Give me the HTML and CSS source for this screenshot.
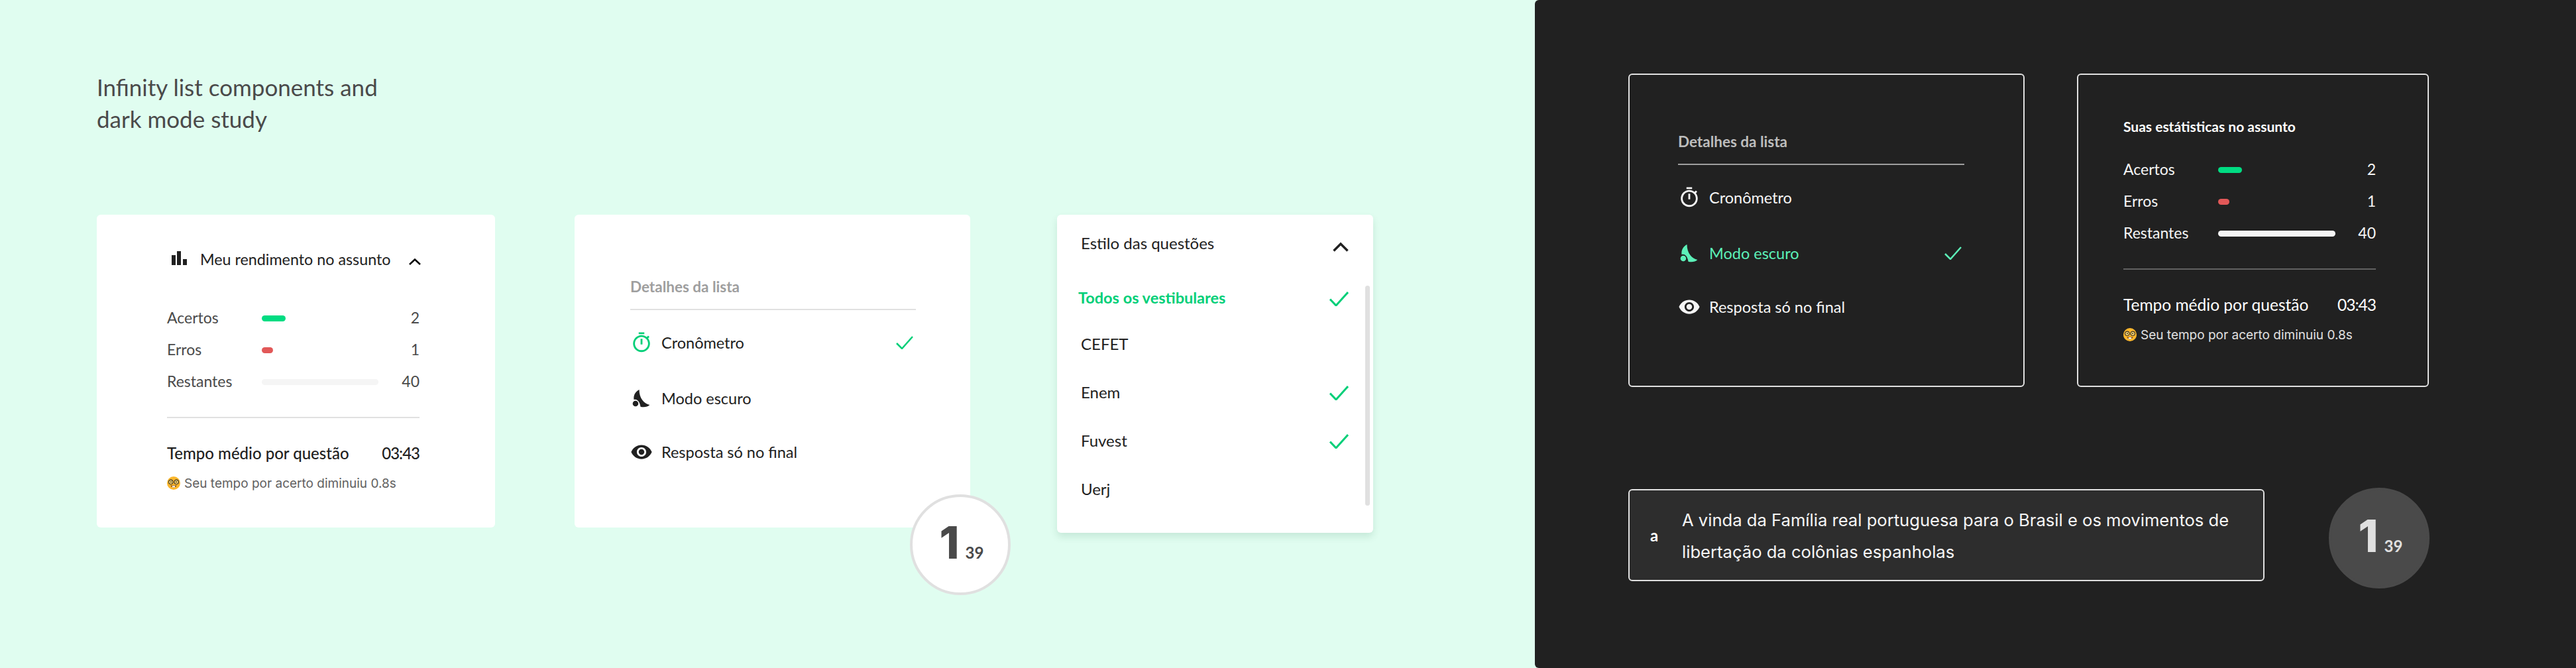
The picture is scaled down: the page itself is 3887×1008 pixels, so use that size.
FILE: index.html
```html
<!DOCTYPE html>
<html lang="en">
<head>
    <meta charset="utf-8">
    <title>Infinity list components and dark mode study</title>
    <link rel="stylesheet" href="styles.css">
</head>
<body>
<svg class="defs" width="0" height="0">
    <symbol id="i-timer" viewBox="0 0 24 24"><path d="M15 1H9v2h6V1zm-4 13h2V8h-2v6zm8.030-6.610l1.420-1.420c-.43-.51-.9-.99-1.410-1.410l-1.420 1.420C16.070 4.740 14.120 4 12 4c-4.970 0-9 4.030-9 9s4.020 9 9 9 9-4.030 9-9c0-2.120-.74-4.070-1.970-5.610zM12 20c-3.870 0-7-3.130-7-7s3.130-7 7-7 7 3.130 7 7-3.130 7-7 7z"/></symbol>
    <symbol id="i-moon" viewBox="30 18 82 86"><path d="M62 20C44 28 34 48 38 66C48 62 64 70 68 98C82 102 100 100 110 90C85 85 62 60 62 20z"/><circle cx="45" cy="84" r="13"/></symbol>
    <symbol id="i-eye" viewBox="0 0 24 24"><path d="M12 4.500C7 4.500 2.730 7.610 1 12c1.730 4.390 6 7.500 11 7.500s9.270-3.110 11-7.500c-1.730-4.390-6-7.500-11-7.500zM12 17c-2.760 0-5-2.240-5-5s2.240-5 5-5 5 2.240 5 5-2.240 5-5 5zm0-8c-1.660 0-3 1.340-3 3s1.340 3 3 3 3-1.340 3-3-1.340-3-3-3z"/></symbol>
    <symbol id="i-emoji" viewBox="0 0 20 20">
        <circle cx="10" cy="10" r="10" fill="#fbb62c"/>
        <path d="M5 13.500c2.500 4 7.500 4 10 0z" fill="#7a4a1c"/>
        <path d="M8 14h1.800v2.400H8zM10.200 14H12v2.400h-1.800z" fill="#fff"/>
        <circle cx="5.800" cy="8.300" r="3.200" fill="#fdd874" stroke="#3a3226" stroke-width="1.200"/>
        <circle cx="14.200" cy="8.300" r="3.200" fill="#fdd874" stroke="#3a3226" stroke-width="1.200"/>
        <circle cx="6" cy="8.300" r="1" fill="#3a3226"/>
        <circle cx="14" cy="8.300" r="1" fill="#3a3226"/>
    </symbol>
</svg>

<div class="page">
    <section class="light">
        <h1 class="title">Infinity list components and<br>dark mode study</h1>
        <div class="cards">
            <div class="card card-stats">
                <div class="stats-head">
                    <svg class="bars-icon" width="23" height="21" viewBox="0 0 23 21"><path d="M0 6h6v15H0zM8 0h6v21H8zM17 12h6v9h-6z"/></svg>
                    <span>Meu rendimento no assunto</span>
                    <svg class="chev" width="18" height="10" viewBox="0 0 18 10"><path d="M1 9l8-7.500L17 9"/></svg>
                </div>
                <div class="stat"><span class="stat-name">Acertos</span><span class="track"><i class="fill green" style="width:36px"></i></span><span class="stat-num">2</span></div>
                <div class="stat"><span class="stat-name">Erros</span><span class="track"><i class="fill red" style="width:17px"></i></span><span class="stat-num">1</span></div>
                <div class="stat"><span class="stat-name">Restantes</span><span class="track"><i class="fill rest" style="width:176px"></i></span><span class="stat-num">40</span></div>
                <div class="rule"></div>
                <div class="time"><span>Tempo médio por questão</span><span class="time-value">03:43</span></div>
                <div class="note"><svg width="20" height="20"><use href="#i-emoji"/></svg><span>Seu tempo por acerto diminuiu 0.8s</span></div>
            </div>

            <div class="card card-details">
                <div class="details-title">Detalhes da lista</div>
                <div class="option"><svg class="opt-icon on"><use href="#i-timer"/></svg><span>Cronômetro</span><svg class="check" width="26" height="20" viewBox="0 0 26 20"><path d="M1 11l8 8L25 1"/></svg></div>
                <div class="option"><svg class="opt-icon moon"><use href="#i-moon"/></svg><span>Modo escuro</span></div>
                <div class="option"><svg class="opt-icon"><use href="#i-eye"/></svg><span>Resposta só no final</span></div>
                <div class="counter"><b>1</b><span>39</span></div>
            </div>

            <div class="card card-select">
                <div class="select-head"><span>Estilo das questões</span><svg class="chev wide" width="24" height="15" viewBox="0 0 24 15"><path d="M1.500 13.500L12 3l10.500 10.500"/></svg></div>
                <div class="select-row active"><span>Todos os vestibulares</span><svg class="check big" width="29" height="22" viewBox="0 0 29 22"><path d="M1 11.500L10 21 28 1"/></svg></div>
                <div class="select-row"><span>CEFET</span></div>
                <div class="select-row"><span>Enem</span><svg class="check big" width="29" height="22" viewBox="0 0 29 22"><path d="M1 11.500L10 21 28 1"/></svg></div>
                <div class="select-row"><span>Fuvest</span><svg class="check big" width="29" height="22" viewBox="0 0 29 22"><path d="M1 11.500L10 21 28 1"/></svg></div>
                <div class="select-row"><span>Uerj</span></div>
                <div class="scrollbar"></div>
            </div>
        </div>
    </section>

    <section class="dark">
        <div class="dark-cards">
            <div class="card-line card-details-dark">
                <div class="details-title">Detalhes da lista</div>
                <div class="option"><svg class="opt-icon"><use href="#i-timer"/></svg><span>Cronômetro</span></div>
                <div class="option mint"><svg class="opt-icon moon"><use href="#i-moon"/></svg><span>Modo escuro</span><svg class="check" width="26" height="20" viewBox="0 0 26 20"><path d="M1 11l8 8L25 1"/></svg></div>
                <div class="option"><svg class="opt-icon"><use href="#i-eye"/></svg><span>Resposta só no final</span></div>
            </div>
            <div class="card-line card-stats-dark">
                <div class="dark-stats-title">Suas estátisticas no assunto</div>
                <div class="stat"><span class="stat-name">Acertos</span><span class="track"><i class="fill green" style="width:36px"></i></span><span class="stat-num">2</span></div>
                <div class="stat"><span class="stat-name">Erros</span><span class="track"><i class="fill red" style="width:17px"></i></span><span class="stat-num">1</span></div>
                <div class="stat"><span class="stat-name">Restantes</span><span class="track"><i class="fill rest" style="width:177px"></i></span><span class="stat-num">40</span></div>
                <div class="rule"></div>
                <div class="time"><span>Tempo médio por questão</span><span class="time-value">03:43</span></div>
                <div class="note"><svg width="20" height="20"><use href="#i-emoji"/></svg><span>Seu tempo por acerto diminuiu 0.8s</span></div>
            </div>
        </div>
        <div class="answer-row">
            <div class="answer">
                <b class="letter">a</b>
                <p>A vinda da Família real portuguesa para o Brasil e os movimentos de libertação da colônias espanholas</p>
            </div>
            <div class="counter counter-dark"><b>1</b><span>39</span></div>
        </div>
    </section>
</div>
</body>
</html>
```

FILE: styles.css
```css
* {
    box-sizing: border-box;
}
html, body {
    margin: 0;
    height: 1008px;
    overflow: hidden;
}
body {
    font-family: "Lato", "Liberation Sans", sans-serif;
    color: #212121;
    background: #e0fdf0;
}
.defs {
    position: absolute;
}
.page {
    display: flex;
    height: 1008px;
}

/* light side */
.light {
    width: 2316px;
    padding: 107px 0 0 146px;
}
.title {
    margin: 0;
    font-size: 35px;
    font-weight: 400;
    line-height: 48px;
    color: #4a4a4a;
}
.cards {
    display: flex;
    align-items: flex-start;
    margin-top: 121px;
}
.card {
    position: relative;
    background: #fff;
    border-radius: 6px;
}
.card-stats {
    width: 601px;
    height: 472px;
    padding: 47px 114px 0 106px;
}
.card-details {
    width: 597px;
    height: 472px;
    margin-left: 120px;
    padding: 87px 82px 0 84px;
}
.card-select {
    width: 477px;
    height: 480px;
    margin-left: 131px;
    padding: 22px 37px 0 36px;
    box-shadow: 0 6px 12px rgba(0, 80, 50, .12);
}

/* stats */
.stats-head {
    display: flex;
    align-items: center;
    height: 40px;
    margin-bottom: 44px;
    padding-left: 7px;
    font-size: 23.300px;
}
.bars-icon {
    margin: -4px 20px 0 0;
    fill: #212121;
}
.chev {
    fill: none;
    stroke: #000;
    stroke-width: 2.500;
    margin: 8px -2px 0 auto;
}
.stat {
    display: flex;
    align-items: center;
    height: 48px;
    font-size: 23px;
    color: #4a4a4a;
}
.stat-name {
    width: 143px;
}
.track {
    display: flex;
    flex: 0 0 176px;
    height: 9px;
    margin-top: 2px;
}
.fill {
    display: block;
    height: 9px;
    border-radius: 5px;
}
.green {
    background: #00dc82;
}
.red {
    background: #e25858;
}
.rest {
    background: #f5f5f5;
}
.stat-num {
    margin-left: auto;
}
.rule {
    height: 2px;
    margin: 30px 0 32px;
    background: #e0e0e0;
}
.time {
    display: flex;
    justify-content: space-between;
    align-items: center;
    height: 40px;
    font-size: 24px;
    font-weight: 500;
}
.time-value {
    letter-spacing: -1px;
}
.note {
    display: flex;
    align-items: center;
    height: 30px;
    margin-top: 11px;
    font-family: "Inter", sans-serif;
    font-size: 19px;
    color: #616161;
}
.note svg {
    margin-right: 6px;
}

/* details list */
.details-title {
    display: flex;
    align-items: center;
    height: 42px;
    font-size: 22.500px;
    font-weight: 700;
    color: #9e9e9e;
}
.option {
    display: flex;
    align-items: center;
    height: 40px;
    margin-top: 41px;
    font-size: 23.500px;
}
.option + .option {
    margin-top: 44px;
}
.option + .option + .option {
    margin-top: 41px;
}
.details-title + .option {
    position: relative;
    margin-top: 44px;
}
.details-title + .option::before {
    content: "";
    position: absolute;
    left: 0;
    right: 0;
    top: -31px;
    height: 2px;
    background: #e0e0e0;
}
.opt-icon {
    width: 34px;
    height: 34px;
    margin-right: 13px;
    fill: #212121;
}
.opt-icon.on {
    fill: #00cf78;
}
.opt-icon.moon {
    width: 27px;
    height: 29px;
    margin: 0 17px 0 3px;
}
.check {
    margin-left: auto;
    margin-right: 4px;
    fill: none;
    stroke: #00cf78;
    stroke-width: 2.500;
}

/* counter bubble */
.counter {
    display: flex;
    align-items: baseline;
    justify-content: center;
    gap: 9px;
    width: 152px;
    height: 152px;
    padding: 33px 0 0 4px;
    border: 4px solid #e0e0e0;
    border-radius: 50%;
    background: #fff;
    color: #4a4a4a;
    font-family: "Inter", sans-serif;
}
.card-details .counter {
    position: absolute;
    left: 506px;
    top: 422px;
}
.counter b {
    font-size: 68px;
    font-weight: 800;
    line-height: 70px;
}
.counter span {
    font-family: "Lato", sans-serif;
    font-size: 24px;
    font-weight: 700;
}

/* select */
.select-head {
    display: flex;
    align-items: center;
    justify-content: space-between;
    height: 40px;
    font-size: 24px;
    color: #212121;
}
.chev.wide {
    stroke: #212121;
    stroke-width: 3.500;
    margin: 12px 0 0 0;
}
.select-row {
    display: flex;
    align-items: center;
    justify-content: space-between;
    height: 73px;
    font-size: 24px;
}
.select-row.active {
    height: 66px;
    margin: 30px 0 0 -4px;
    color: #00cf78;
    font-size: 23.500px;
    font-weight: 700;
}
.check.big {
    margin: 3px 0 0 0;
    stroke-width: 3;
}
.scrollbar {
    position: absolute;
    left: 465px;
    top: 107px;
    width: 7px;
    height: 332px;
    border-radius: 4px;
    background: #e0e0e0;
}

/* dark side */
.dark {
    flex: 1;
    padding: 111px 0 0 141px;
    border-radius: 6px 0 0 6px;
    background: #212121;
    color: #fff;
}
.dark-cards {
    display: flex;
    gap: 79px;
}
.card-line {
    height: 473px;
    border: 2px solid #e0e0e0;
    border-radius: 6px;
}
.card-details-dark {
    width: 598px;
    padding: 79px 89px 0 73px;
}
.card-details-dark .details-title {
    color: #bdbdbd;
}
.card-details-dark .details-title + .option::before {
    background: #9e9e9e;
}
.card-details-dark .opt-icon {
    fill: #f5f5f5;
}
.card-details-dark .option {
    color: #f5f5f5;
}
.card-details-dark .option.mint {
    color: #5cf0b8;
}
.card-details-dark .mint .opt-icon {
    fill: #5cf0b8;
}
.mint .check {
    stroke: #5cf0b8;
}
.card-stats-dark {
    width: 531px;
    padding: 60px 78px 0 68px;
}
.dark-stats-title {
    display: flex;
    align-items: center;
    height: 34px;
    margin-bottom: 24px;
    font-size: 21px;
    font-weight: 700;
}
.card-stats-dark .stat {
    color: #f5f5f5;
}
.card-stats-dark .track {
    flex-basis: 177px;
}
.card-stats-dark .rule {
    background: #616161;
}
.card-stats-dark .time {
    font-weight: 400;
    font-size: 24.500px;
    color: #fff;
}
.card-stats-dark .note {
    color: #e0e0e0;
}
.answer-row {
    display: flex;
    align-items: flex-start;
    margin-top: 154px;
}
.answer {
    display: flex;
    align-items: center;
    width: 960px;
    height: 139px;
    padding-left: 31px;
    border: 2px solid #e0e0e0;
    border-radius: 6px;
    background: #2d2d2d;
}
.letter {
    width: 48px;
    font-size: 24px;
}
.answer p {
    width: 860px;
    margin: 0;
    padding-top: 3px;
    font-family: "Inter", sans-serif;
    font-size: 25.600px;
    line-height: 48px;
    color: #f5f5f5;
}
.counter-dark {
    margin: -2px 0 0 97px;
    border-color: #4a4a4a;
    background: #4a4a4a;
    color: #e0e0e0;
}
```
